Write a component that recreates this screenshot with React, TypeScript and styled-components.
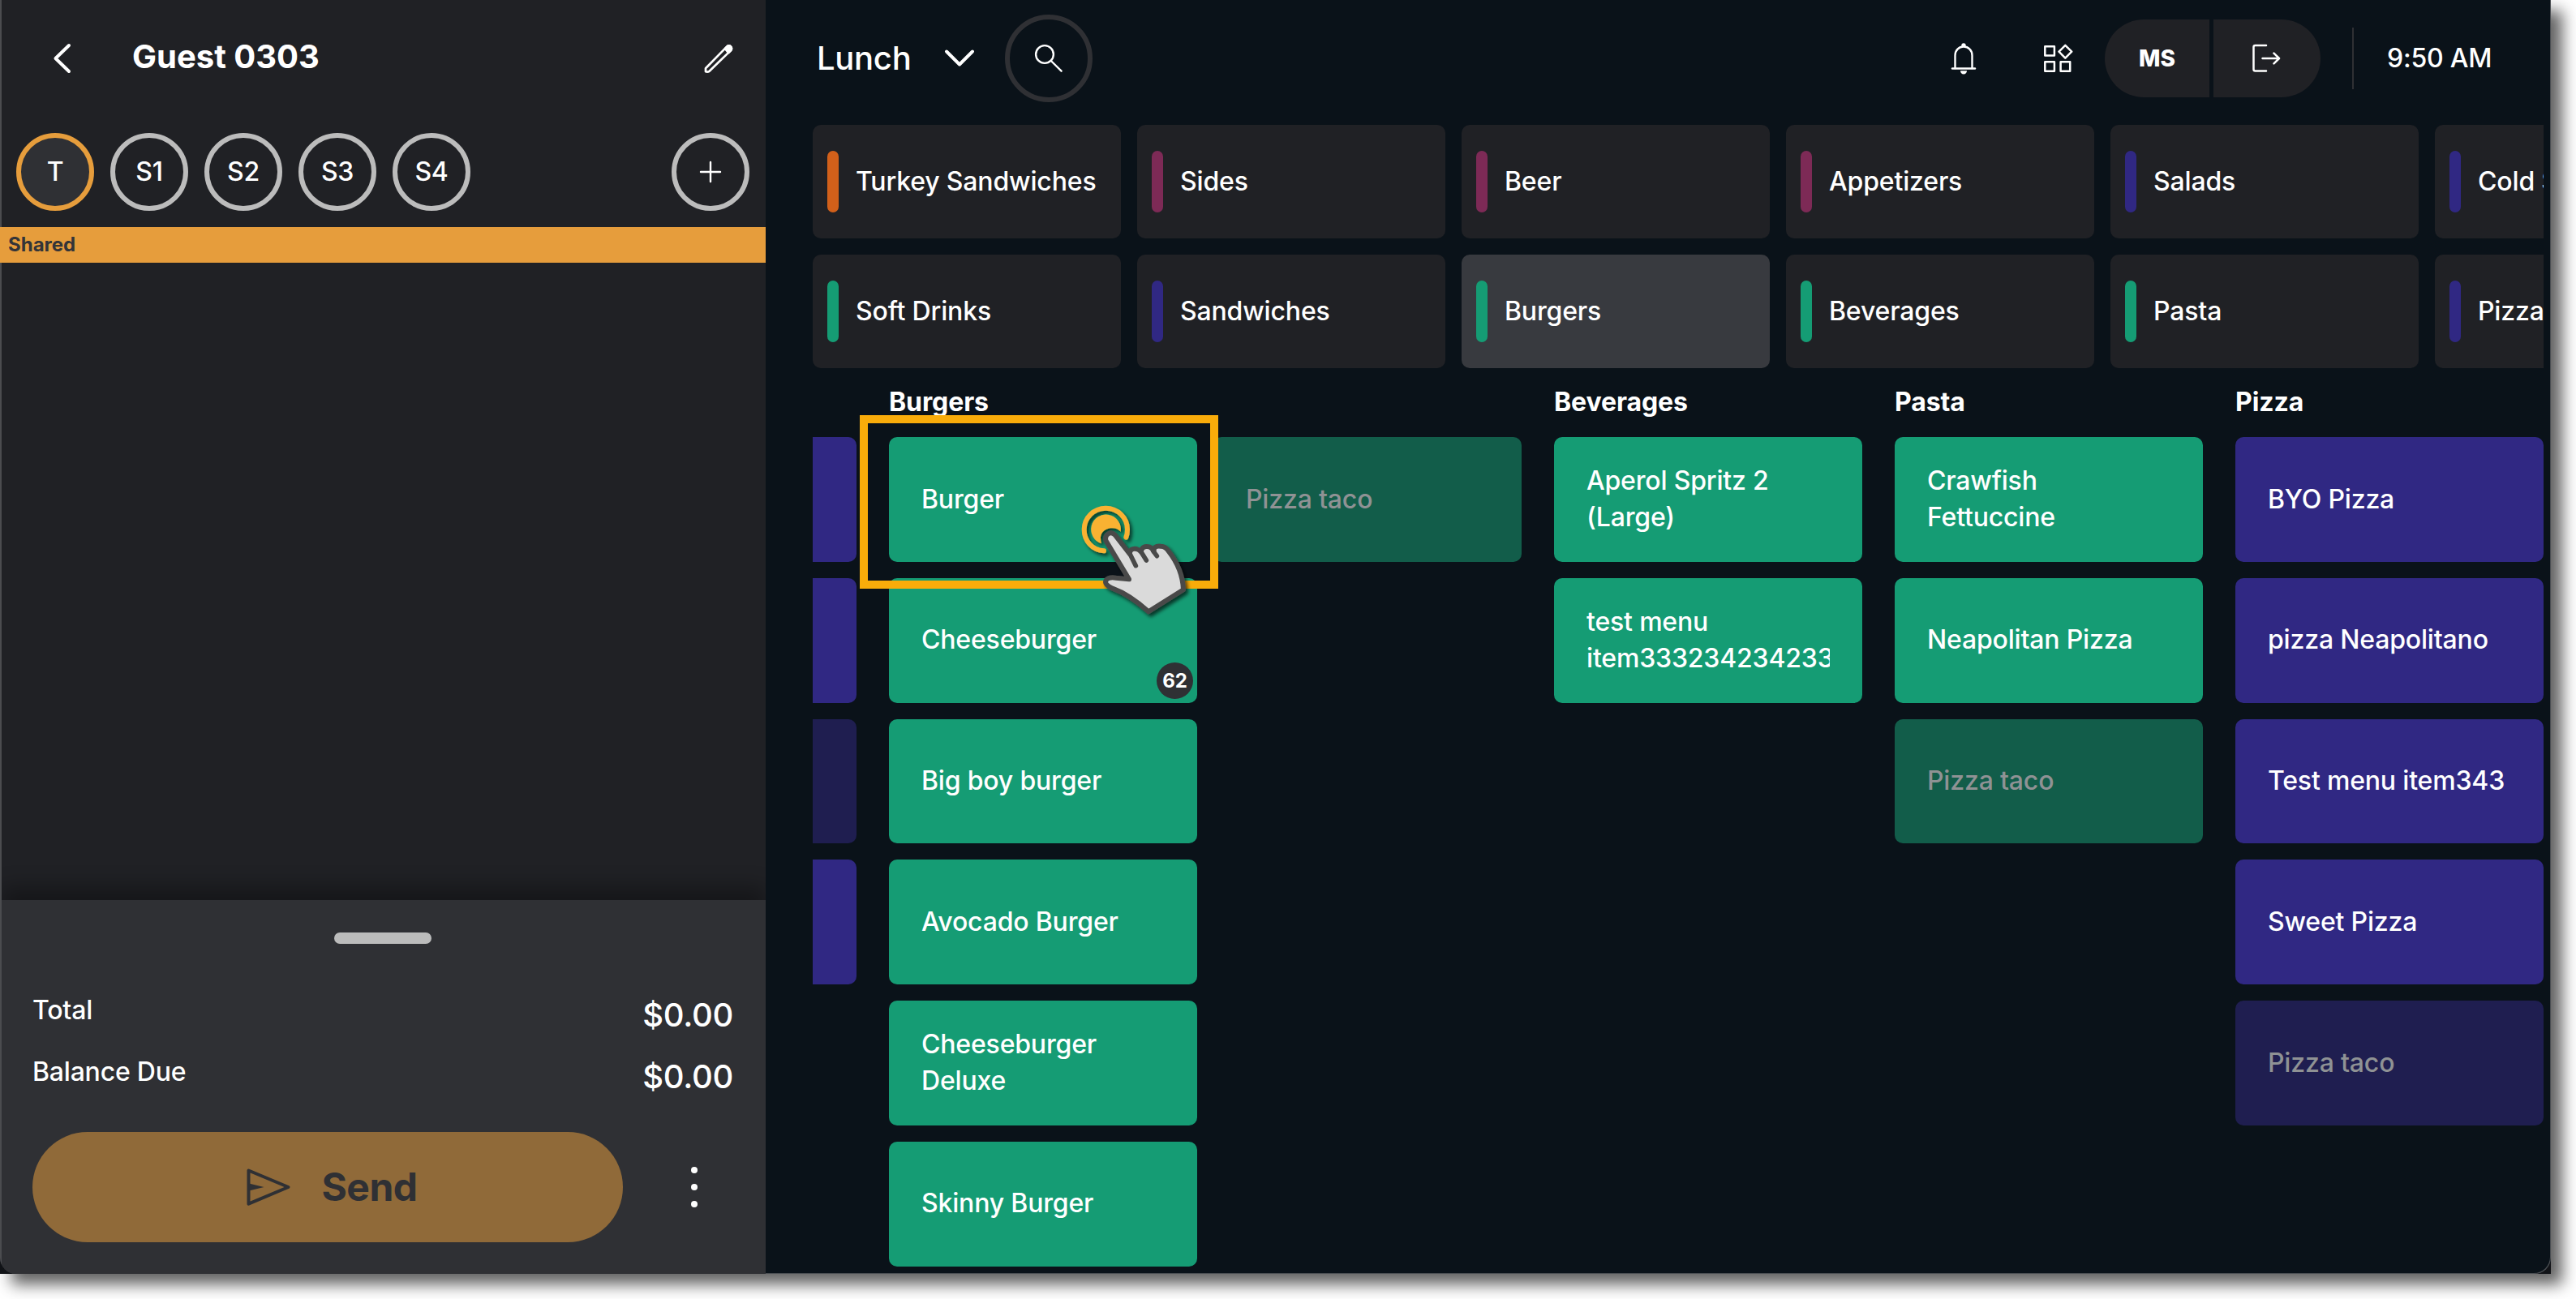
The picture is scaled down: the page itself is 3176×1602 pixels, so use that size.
import React from "react";
import styled, { createGlobalStyle, css } from "styled-components";

const GlobalStyle = createGlobalStyle`
  *, *::before, *::after { box-sizing: border-box; }
  html, body { margin: 0; padding: 0; background: #fff; overflow: hidden; }
  body { font-family: Inter, "Liberation Sans", sans-serif; color: #fff; }
  button { font: inherit; color: inherit; letter-spacing: inherit; border: 0; padding: 0; background: none; text-align: left; }
`;

const palette = {
  green: "#159c74",
  greenDim: "#125d4a",
  indigo: "#302883",
  indigoDim: "#1f1e50",
  plum: "#7d2a56",
  orange: "#d2601a",
  amber: "#e69d3c",
  panel: "#202125",
  footer: "#2f3034",
  ink: "#0a1219",
};

const Stage = styled.div`
  position: relative;
  width: 3176px;
  height: 1602px;
  overflow: hidden;
  background: #fff;
`;

const Backdrop = styled.div`
  width: 3145px;
  height: 1571px;
  background: #111317;
  box-shadow: 14px 13px 18px rgba(0, 0, 0, 0.62);
`;

const Shell = styled.div`
  display: flex;
  width: 3145px;
  height: 1571px;
  overflow: hidden;
  border-radius: 0 0 20px 20px;
  background: ${palette.ink};
  box-shadow: inset -1px -1px 0 #4a4e52;
`;

const OrderPanel = styled.aside`
  display: flex;
  flex-direction: column;
  width: 944px;
  flex: none;
  background: ${palette.panel};
  border-left: 2px solid #4b4c4f;
`;

const GuestBar = styled.header`
  display: flex;
  align-items: center;
  height: 144px;
  padding: 0 35px 0 52px;
`;

const GuestName = styled.h1`
  flex: 1;
  margin: 0 0 4px 61px;
  font-size: 40px;
  line-height: 48px;
  font-weight: 700;
`;

const IconButton = styled.button`
  display: flex;
  flex: none;
  align-items: center;
  justify-content: center;
  width: 48px;
  height: 48px;
`;

const Seats = styled.div`
  display: flex;
  align-items: center;
  gap: 20px;
  height: 136px;
  padding: 0 20px 0 18px;
`;

const Seat = styled.button<{ $active?: boolean; $end?: boolean }>`
  display: flex;
  align-items: center;
  justify-content: center;
  width: 96px;
  height: 96px;
  border-radius: 50%;
  border: 6px solid ${(p) => (p.$active ? palette.amber : "#bcbcbc")};
  background: ${(p) => (p.$active ? palette.footer : "transparent")};
  font-size: 32px;
  line-height: 38px;
  font-weight: 500;
  letter-spacing: -0.3px;
  ${(p) => p.$end && css`margin-left: auto;`}
`;

const SharedBar = styled.div`
  height: 44px;
  margin-left: -2px;
  padding-left: 10px;
  background: ${palette.amber};
  color: #333438;
  font-size: 24px;
  line-height: 43px;
  font-weight: 700;
`;

const Check = styled.div`
  flex: 1;
`;

const Footer = styled.footer`
  display: flex;
  flex-direction: column;
  height: 461px;
  padding: 40px 40px 0 38px;
  background: ${palette.footer};
  box-shadow: 0 -16px 24px rgba(0, 0, 0, 0.33);
  clip-path: inset(-60px 0 0 0);
`;

const Handle = styled.div`
  align-self: center;
  width: 120px;
  height: 14px;
  border-radius: 7px;
  background: #bcbcbc;
`;

const Totals = styled.dl`
  margin: 49px 0 0;
`;

const TotalRow = styled.div`
  display: flex;
  justify-content: space-between;
  align-items: flex-start;
  height: 76px;
`;

const TotalLabel = styled.dt`
  font-size: 32px;
  line-height: 66px;
  font-weight: 500;
  letter-spacing: -0.2px;
`;

const TotalValue = styled.dd`
  margin: 0;
  font-size: 40px;
  line-height: 78px;
  font-weight: 500;
  letter-spacing: -0.3px;
`;

const Actions = styled.div`
  display: flex;
  align-items: center;
  margin-top: 31px;
`;

const SendButton = styled.button`
  display: flex;
  align-items: center;
  justify-content: center;
  gap: 37px;
  width: 728px;
  height: 136px;
  padding-left: 10px;
  border-radius: 68px;
  background: #906a39;
  color: #2f3034;
  font-size: 48px;
  line-height: 56px;
  font-weight: 700;
  letter-spacing: -0.5px;
`;

const MoreButton = styled.button`
  display: flex;
  flex-direction: column;
  align-items: center;
  gap: 13px;
  width: 48px;
  margin-left: 64px;
`;

const Dot = styled.span`
  width: 8px;
  height: 8px;
  border-radius: 50%;
  background: #fff;
`;

const Main = styled.main`
  display: flex;
  flex-direction: column;
  flex: 1;
  min-width: 0;
  padding: 0 9px 0 58px;
`;

const TopBar = styled.header`
  display: flex;
  align-items: center;
  height: 144px;
`;

const MenuPicker = styled.button`
  display: flex;
  align-items: center;
  justify-content: space-between;
  width: 201px;
  margin-right: 36px;
  padding-left: 5px;
  font-size: 40px;
  line-height: 48px;
  font-weight: 500;
  letter-spacing: -0.3px;
`;

const SearchButton = styled.button`
  display: flex;
  align-items: center;
  justify-content: center;
  width: 108px;
  height: 108px;
  border: 6px solid #2f3034;
  border-radius: 50%;
`;

const TopActions = styled.div`
  display: flex;
  align-items: center;
  margin-left: auto;
`;

const IconSlot = styled.button<{ $gap: number }>`
  display: flex;
  width: 48px;
  height: 48px;
  margin-right: ${(p) => p.$gap}px;
`;

const Pill = styled.div`
  display: flex;
  gap: 5px;
  height: 96px;
  border-radius: 48px;
  overflow: hidden;
`;

const PillHalf = styled.button<{ $w: number }>`
  display: flex;
  align-items: center;
  justify-content: center;
  width: ${(p) => p.$w}px;
  background: ${palette.panel};
  font-size: 28px;
  font-weight: 800;
  line-height: 34px;
`;

const Divider = styled.div`
  width: 2px;
  height: 76px;
  margin: 0 41px 0 39px;
  background: #2f3034;
`;

const Clock = styled.time`
  width: 193px;
  font-size: 32px;
  font-weight: 500;
  line-height: 38px;
  letter-spacing: -0.2px;
  white-space: nowrap;
`;

const Categories = styled.div`
  display: grid;
  grid-template-columns: repeat(6, 380px);
  grid-auto-rows: 140px;
  gap: 20px;
  margin-top: 10px;
  overflow: hidden;
`;

const Category = styled.button<{ $selected?: boolean }>`
  display: flex;
  align-items: center;
  gap: 21px;
  padding-left: 18px;
  border-radius: 10px;
  background: ${(p) => (p.$selected ? "#383a3f" : palette.panel)};
  font-size: 32px;
  line-height: 38px;
  font-weight: 500;
  letter-spacing: -0.16px;
  white-space: nowrap;
  overflow: hidden;
`;

const Stripe = styled.span<{ $color: string }>`
  flex: none;
  width: 14px;
  height: 76px;
  border-radius: 7px;
  background: ${(p) => p.$color};
`;

const Menu = styled.div`
  display: flex;
  gap: 40px;
  flex: 1;
  overflow: hidden;
`;

const Section = styled.section`
  flex: none;
`;

const Heading = styled.h2`
  height: 85px;
  margin: 0;
  font-size: 32px;
  line-height: 84px;
  font-weight: 700;
  letter-spacing: -0.1px;
`;

const Tiles = styled.div<{ $w: number }>`
  display: grid;
  grid-auto-flow: column;
  grid-template-rows: repeat(6, 153.8px);
  grid-auto-columns: ${(p) => p.$w}px;
  gap: 20px;
`;

const Tile = styled.button<{ $tone: "green" | "indigo"; $off?: boolean; $cut?: boolean }>`
  position: relative;
  display: flex;
  align-items: center;
  padding: ${(p) => (p.$cut ? "0" : "0 40px")};
  border-radius: ${(p) => (p.$cut ? "0 10px 10px 0" : "10px")};
  background: ${(p) =>
    p.$tone === "green"
      ? p.$off ? palette.greenDim : palette.green
      : p.$off ? palette.indigoDim : palette.indigo};
  color: ${(p) => (p.$off ? "#8f9294" : "#fff")};
`;

const TileText = styled.span`
  width: 300px;
  overflow: hidden;
  font-size: 32px;
  line-height: 44.8px;
  font-weight: 500;
  letter-spacing: -0.18px;
`;

const Count = styled.span`
  position: absolute;
  right: 5px;
  bottom: 5px;
  width: 45px;
  height: 45px;
  border-radius: 50%;
  background: #2f3034;
  font-size: 24px;
  line-height: 45px;
  font-weight: 700;
  text-align: center;
`;

const Callout = styled.div`
  position: absolute;
  left: 1060px;
  top: 512px;
  width: 442px;
  height: 214px;
  border: 10px solid #f9ac0a;
`;

const Pointer = styled.svg`
  position: absolute;
  left: 1300px;
  top: 580px;
  width: 260px;
  height: 200px;
`;

type Item = { name: string; off?: boolean; count?: number };
type Group = { title: string; tone: "green" | "indigo"; items: Item[] };

const categories: { name: string; color: string; selected?: boolean }[] = [
  { name: "Turkey Sandwiches", color: palette.orange },
  { name: "Sides", color: palette.plum },
  { name: "Beer", color: palette.plum },
  { name: "Appetizers", color: palette.plum },
  { name: "Salads", color: palette.indigo },
  { name: "Cold Subs", color: palette.indigo },
  { name: "Soft Drinks", color: palette.green },
  { name: "Sandwiches", color: palette.indigo },
  { name: "Burgers", color: palette.green, selected: true },
  { name: "Beverages", color: palette.green },
  { name: "Pasta", color: palette.green },
  { name: "Pizza", color: palette.indigo },
];

const groups: Group[] = [
  {
    title: "Burgers",
    tone: "green",
    items: [
      { name: "Burger" },
      { name: "Cheeseburger", count: 62 },
      { name: "Big boy burger" },
      { name: "Avocado Burger" },
      { name: "Cheeseburger Deluxe" },
      { name: "Skinny Burger" },
      { name: "Pizza taco", off: true },
    ],
  },
  {
    title: "Beverages",
    tone: "green",
    items: [{ name: "Aperol Spritz 2 (Large)" }, { name: "test menu item333234234233" }],
  },
  {
    title: "Pasta",
    tone: "green",
    items: [{ name: "Crawfish Fettuccine" }, { name: "Neapolitan Pizza" }, { name: "Pizza taco", off: true }],
  },
  {
    title: "Pizza",
    tone: "indigo",
    items: [
      { name: "BYO Pizza" },
      { name: "pizza Neapolitano" },
      { name: "Test menu item343" },
      { name: "Sweet Pizza" },
      { name: "Pizza taco", off: true },
    ],
  },
];

const stroke = {
  fill: "none",
  stroke: "currentColor",
  strokeLinecap: "round" as const,
  strokeLinejoin: "round" as const,
};

const BackIcon = () => (
  <svg width="48" height="48" viewBox="0 0 48 48" {...stroke} strokeWidth="4">
    <path d="M31 8 14.5 24 31 40" />
  </svg>
);

const PencilIcon = () => (
  <svg width="48" height="48" viewBox="0 0 48 48" {...stroke} strokeWidth="2.7">
    <path d="M9 40.300v-4L35.300 9.400a3.300 3.300 0 0 1 4.700 0 3.300 3.300 0 0 1 0 4.700L13.600 39.800Q11.500 41.200 9 40.300Z" />
    <path d="m33 12 3-3q2.300-1.500 4 .5t.3 4.500l-3 3z" fill="currentColor" />
  </svg>
);

const PlusIcon = () => (
  <svg width="28" height="28" viewBox="0 0 28 28" {...stroke} strokeWidth="2.4">
    <path d="M14 2v24M2 14h24" />
  </svg>
);

const ChevronDown = () => (
  <svg width="40" height="40" viewBox="0 0 40 40" {...stroke} strokeWidth="4">
    <path d="M4 11.500 20 27.500l16-16" />
  </svg>
);

const SearchIcon = () => (
  <svg width="48" height="48" viewBox="0 0 48 48" {...stroke} strokeWidth="2.400">
    <circle cx="19" cy="19" r="10.900" />
    <path d="m26.800 27 12.800 12.700" />
  </svg>
);

const BellIcon = () => (
  <svg width="48" height="48" viewBox="0 0 48 48" {...stroke} strokeWidth="2.400">
    <path d="M10 36.500h28" />
    <path d="M13.500 36V20.500C13.500 14 18 9.500 24 9.500S34.500 14 34.500 20.500V36" />
    <path d="M21.300 9.500V8a2.700 2.700 0 0 1 5.400 0v1.500z" fill="currentColor" stroke="none" />
    <path d="M20 39.300h8c0 2.400-1.700 4.200-4 4.200s-4-1.800-4-4.200Z" fill="currentColor" stroke="none" />
  </svg>
);

const AppsIcon = () => (
  <svg width="48" height="48" viewBox="0 0 48 48" {...stroke} strokeWidth="2.500">
    <rect x="8.300" y="9.200" width="11.600" height="11.200" />
    <rect x="8.300" y="28.200" width="11.600" height="11.600" />
    <rect x="27.600" y="28.200" width="11.600" height="11.600" />
    <path d="m33.300 7.900 7.900 7.800-7.900 7.900-7.800-7.900z" />
  </svg>
);

const LogoutIcon = () => (
  <svg width="48" height="48" viewBox="0 0 48 48" {...stroke} strokeWidth="2.500">
    <path d="M23 8H9.500Q7.500 8 7.500 10v27.500q0 2 2 2H23M18.500 24h20.300M32.500 17.700l6.500 6.300-6.500 6.300" />
  </svg>
);

const SendIcon = () => (
  <svg width="56" height="48" viewBox="0 0 56 48" {...stroke} strokeWidth="4">
    <path d="M3.500 3.500 52.500 24l-49 20.700z" />
    <path d="M4 19.500 22.500 24 4 28.500z" fill="currentColor" stroke="none" />
  </svg>
);

const HandPointer = () => (
  <Pointer viewBox="0 0 780 600">
    <defs>
      <filter id="drop" x="-20%" y="-20%" width="150%" height="150%">
        <feDropShadow dx="9" dy="10" stdDeviation="6" floodColor="#000" floodOpacity="0.65" />
      </filter>
    </defs>
    <g filter="url(#drop)">
      <path d="M183 298C141 296 110 262 110 219c0-44 36-79 80-79s80 35 80 79q0 16-5 29" fill="none" stroke="#f9b233" strokeWidth="18" strokeLinecap="round" />
      <path d="M174 271A55 55 0 1 1 245 227Q230 211 207 214 170 222 171 252Q171 263 174 271Z" fill="#f9b233" />
    </g>
    <g filter="url(#drop)">
      <path
        d="M190 260C185 237 208 222 224 239L278 309Q280 286 304 291 313 294 320 301 325 277 351 283 363 289 368 300 366 277 394 281 411 281 422 299 474 365 477 442L348 523Q278 460 215 437 182 422 191 407 199 394 228 398L276 403Z"
        fill="#dadada"
        stroke="#4a4a49"
        strokeWidth="18"
        strokeLinejoin="round"
      />
      <path d="M278 307 301 353M320 301 340 333M365 298 379 317" fill="none" stroke="#4a4a49" strokeWidth="17" strokeLinecap="round" />
    </g>
  </Pointer>
);

const stub: { off?: boolean }[] = [{}, {}, { off: true }, {}];

export default function App() {
  return (
    <Stage>
      <GlobalStyle />
      <Backdrop>
        <Shell>
          <OrderPanel>
            <GuestBar>
              <IconButton aria-label="Back"><BackIcon /></IconButton>
              <GuestName>Guest 0303</GuestName>
              <IconButton aria-label="Edit guest"><PencilIcon /></IconButton>
            </GuestBar>
            <Seats>
              {["T", "S1", "S2", "S3", "S4"].map((s) => (
                <Seat key={s} $active={s === "T"}>{s}</Seat>
              ))}
              <Seat $end aria-label="Add seat"><PlusIcon /></Seat>
            </Seats>
            <SharedBar>Shared</SharedBar>
            <Check />
            <Footer>
              <Handle />
              <Totals>
                {["Total", "Balance Due"].map((label) => (
                  <TotalRow key={label}>
                    <TotalLabel>{label}</TotalLabel>
                    <TotalValue>$0.00</TotalValue>
                  </TotalRow>
                ))}
              </Totals>
              <Actions>
                <SendButton><SendIcon />Send</SendButton>
                <MoreButton aria-label="More"><Dot /><Dot /><Dot /></MoreButton>
              </Actions>
            </Footer>
          </OrderPanel>
          <Main>
            <TopBar>
              <MenuPicker>Lunch<ChevronDown /></MenuPicker>
              <SearchButton aria-label="Search"><SearchIcon /></SearchButton>
              <TopActions>
                <IconSlot $gap={68} aria-label="Notifications"><BellIcon /></IconSlot>
                <IconSlot $gap={34} aria-label="Apps"><AppsIcon /></IconSlot>
                <Pill>
                  <PillHalf $w={129}>MS</PillHalf>
                  <PillHalf $w={132} aria-label="Log out"><LogoutIcon /></PillHalf>
                </Pill>
                <Divider />
                <Clock>9:50 AM</Clock>
              </TopActions>
            </TopBar>
            <Categories>
              {categories.map((c) => (
                <Category key={c.name} $selected={c.selected}>
                  <Stripe $color={c.color} />
                  {c.name}
                </Category>
              ))}
            </Categories>
            <Menu>
              <Section>
                <Heading />
                <Tiles $w={54}>
                  {stub.map((s, i) => (
                    <Tile key={i} $tone="indigo" $off={s.off} $cut />
                  ))}
                </Tiles>
              </Section>
              {groups.map((g) => (
                <Section key={g.title}>
                  <Heading>{g.title}</Heading>
                  <Tiles $w={380}>
                    {g.items.map((item) => (
                      <Tile key={item.name} $tone={g.tone} $off={item.off}>
                        <TileText>{item.name}</TileText>
                        {item.count !== undefined && <Count>{item.count}</Count>}
                      </Tile>
                    ))}
                  </Tiles>
                </Section>
              ))}
            </Menu>
          </Main>
        </Shell>
      </Backdrop>
      <Callout />
      <HandPointer />
    </Stage>
  );
}
